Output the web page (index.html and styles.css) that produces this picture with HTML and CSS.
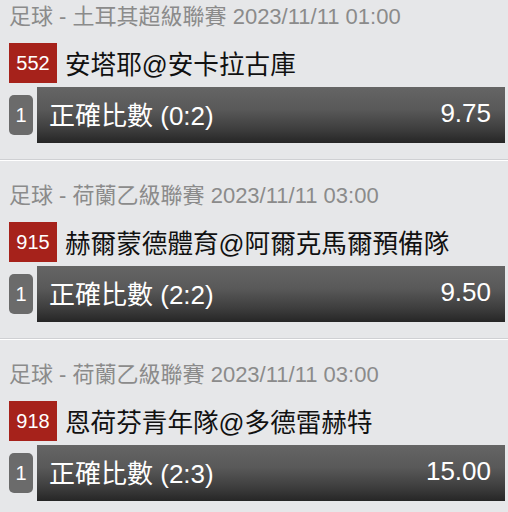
FILE: index.html
```html
<!DOCTYPE html>
<html lang="zh-Hant">
<head>
<meta charset="utf-8">
<title>投注</title>
<link rel="stylesheet" href="styles.css">
</head>
<body>
<div class="list">
  <section class="match">
    <div class="league">足球 - 土耳其超級聯賽 2023/11/11 01:00</div>
    <div class="teams"><span class="code">552</span><span class="name">安塔耶@安卡拉古庫</span></div>
    <div class="bet"><span class="idx">1</span><div class="bar"><span class="sel">正確比數 (0:2)</span><span class="odds">9.75</span></div></div>
  </section>
  <section class="match">
    <div class="league">足球 - 荷蘭乙級聯賽 2023/11/11 03:00</div>
    <div class="teams"><span class="code">915</span><span class="name">赫爾蒙德體育@阿爾克馬爾預備隊</span></div>
    <div class="bet"><span class="idx">1</span><div class="bar"><span class="sel">正確比數 (2:2)</span><span class="odds">9.50</span></div></div>
  </section>
  <section class="match">
    <div class="league">足球 - 荷蘭乙級聯賽 2023/11/11 03:00</div>
    <div class="teams"><span class="code">918</span><span class="name">恩荷芬青年隊@多德雷赫特</span></div>
    <div class="bet"><span class="idx">1</span><div class="bar"><span class="sel">正確比數 (2:3)</span><span class="odds">15.00</span></div></div>
  </section>
</div>
</body>
</html>
```
FILE: styles.css
```css
html, body {
  margin: 0;
  padding: 0;
  background: #e6e7e9;
}
body {
  font-family: "Liberation Sans", "Noto Sans CJK TC", sans-serif;
  width: 508px;
  overflow: hidden;
}
.match {
  padding: 22px 0 16px 0;
  border-top: 1px solid #ffffff;
  border-bottom: 1px solid #cfd0d3;
}
.match:first-child {
  padding-top: 4px;
  border-top: none;
}
.league {
  padding-left: 9px;
  font-size: 22px;
  line-height: 26px;
  height: 26px;
  color: #8b8b8b;
  white-space: nowrap;
}
.teams {
  margin-top: 13px;
  display: flex;
  align-items: center;
  height: 40px;
  padding-left: 9px;
}
.code {
  width: 48px;
  height: 40px;
  background: #a6221b;
  color: #ffffff;
  font-size: 20px;
  display: flex;
  align-items: center;
  justify-content: center;
}
.name {
  margin-left: 8px;
  margin-bottom: 2px;
  font-size: 25.6px;
  color: #111111;
  white-space: nowrap;
}
.bet {
  margin-top: 4px;
  display: flex;
  align-items: center;
  height: 56px;
  padding-left: 9px;
}
.idx {
  width: 24px;
  height: 40px;
  border-radius: 5px;
  background: #6b6b6b;
  color: #ffffff;
  font-size: 20px;
  display: flex;
  align-items: center;
  justify-content: center;
}
.bar {
  margin-left: 4px;
  width: 468px;
  height: 56px;
  box-sizing: border-box;
  display: flex;
  align-items: center;
  justify-content: space-between;
  padding: 0 14px 4px 12px;
  background: linear-gradient(#656565 0%, #595959 40%, #3e3e3e 75%, #262626 100%);
  color: #ffffff;
  font-size: 26px;
}
.sel, .odds {
  white-space: nowrap;
}
```
